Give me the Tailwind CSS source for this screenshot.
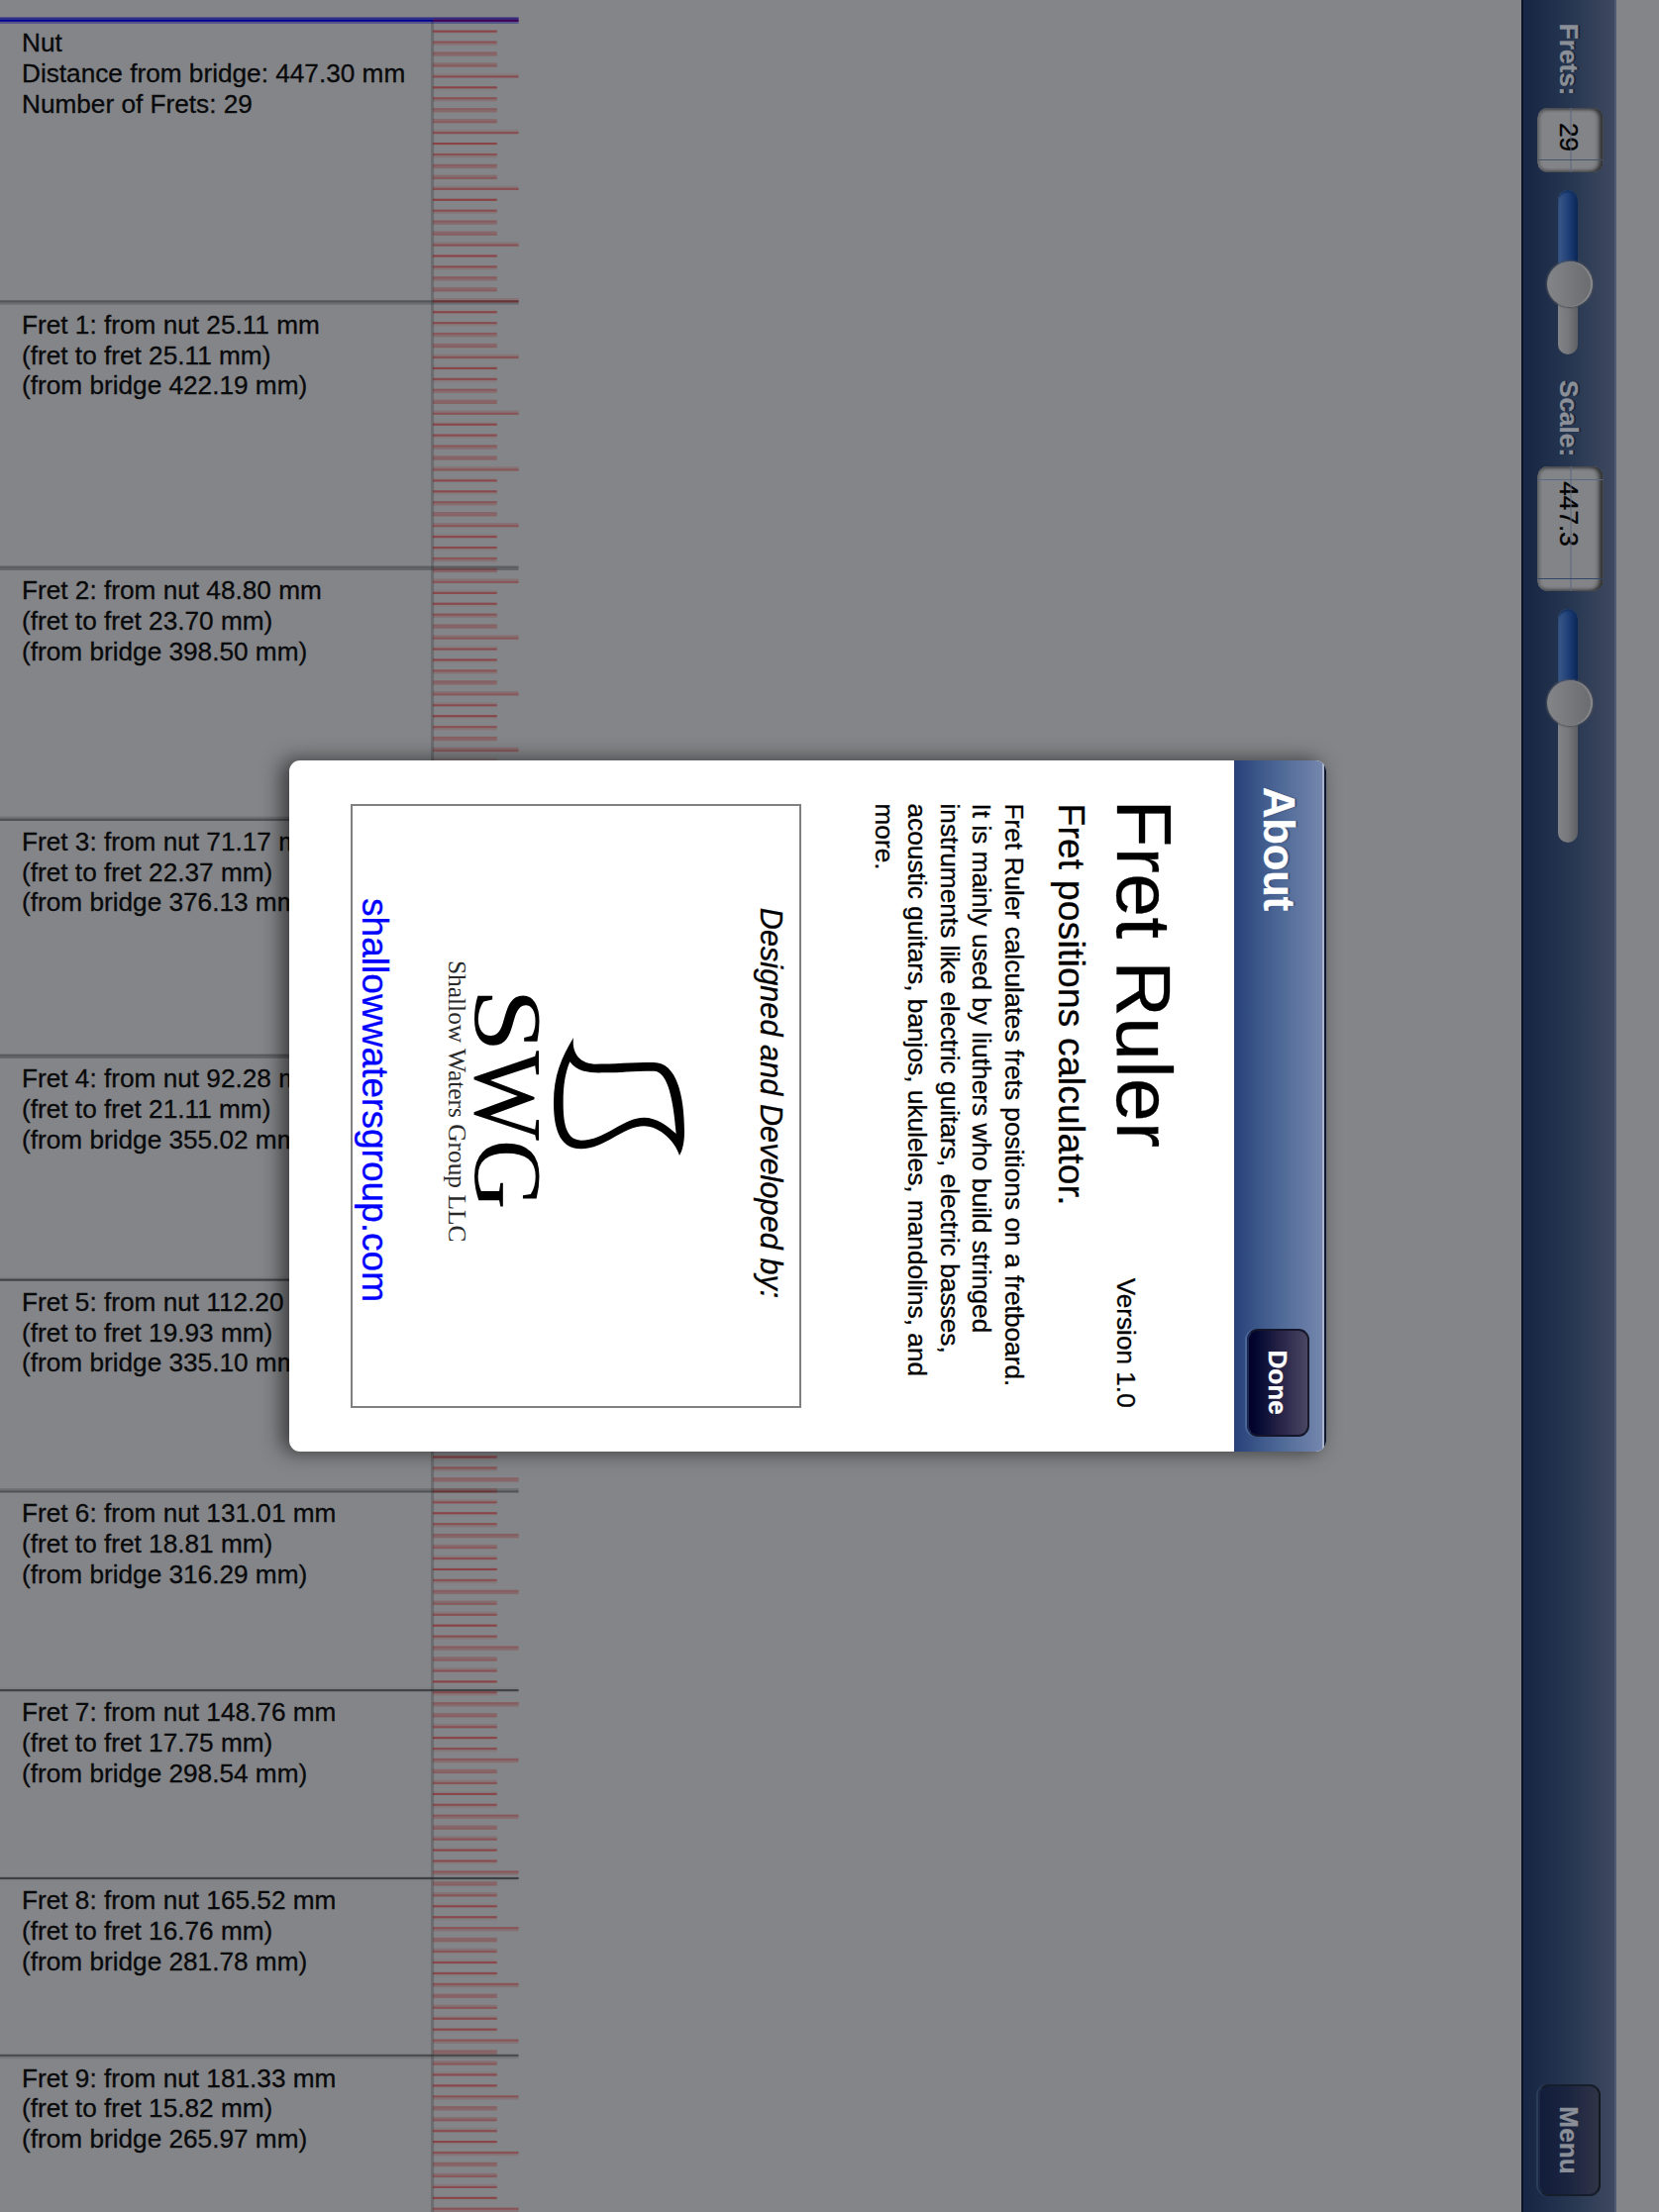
<!DOCTYPE html>
<html lang="en">
<head>
<meta charset="utf-8">
<title>Fret Ruler</title>
<script src="https://cdn.jsdelivr.net/npm/@tailwindcss/browser@4"></script>
</head>
<body class="relative h-[2234px] w-[1675px] overflow-hidden bg-[#848588] font-['Liberation_Sans',Arial,sans-serif] text-[26.18px] text-black [-webkit-text-stroke-width:0.3px]">

<!-- Fretboard ruler -->
<main class="relative h-[2234px] w-[524px] overflow-hidden">
  <svg id="ruler" class="absolute inset-0 h-[2234px] w-[524px]" viewBox="0 0 240.19 1024" preserveAspectRatio="none"></svg>
  <ol id="frets" class="relative pt-[20.4px] pl-[22px] leading-[30.7px] tracking-[0.01px] text-[#08090b]"></ol>
</main>

<!-- Landscape interface -->
<div class="absolute top-0 left-[1675px] h-[1675px] w-[2234px] origin-top-left rotate-90 pt-[43.3px]">
  <header class="flex h-24 items-center border-t-2 border-b-2 border-t-[#505c74] border-b-[#0b1426] bg-linear-to-b from-[#3f4960] via-[#263650] via-50% to-[#172544] pr-4 pl-[23.8px] font-bold text-[#8b8f97]">
    <span class="w-[72.7px] [text-shadow:0_-2px_0_#1a2438]">Frets:</span>
    <div class="relative ml-[12.5px] flex h-[66px] w-[65px] -translate-y-[1.5px] items-center rounded-[10px] bg-[#838487] pl-[15px] font-normal text-black shadow-[inset_0_4px_4px_#303133,inset_0_-2px_3px_#66686c,inset_2px_0_3px_#55575b,inset_-2px_0_3px_#66686c]">
      <span class="translate-y-[1.5px]">29</span>
      <i class="absolute top-[32px] left-0 h-px w-full bg-[#5a6880]"></i>
      <i class="absolute top-0 right-[12px] h-full w-px bg-[#46546c]"></i>
    </div>
    <div class="relative ml-[18px] h-5 w-[166px] translate-y-px rounded-full bg-linear-to-b from-[#5f6064] via-[#77787c] to-[#828387]">
      <div class="h-5 w-[95px] rounded-l-full bg-linear-to-b from-[#0a2657] via-[#204079] to-[#3c5a88] shadow-[inset_2px_0_2px_#12305f]"></div>
      <div class="absolute -top-[15.5px] left-[72px] size-[46px] rounded-full bg-linear-to-b from-[#6a6b6f] to-[#848588] shadow-[inset_0_2px_1px_#88898c,0_0_2px_1px_#4d5159]"></div>
    </div>
    <span class="ml-[26px] w-[77px] [text-shadow:0_-2px_0_#1a2438]">Scale:</span>
    <div class="relative ml-[10.3px] flex h-[66px] w-[126px] -translate-y-[1.5px] items-center rounded-[10px] bg-[#838487] pl-[15px] font-normal text-black shadow-[inset_0_4px_4px_#303133,inset_0_-2px_3px_#66686c,inset_2px_0_3px_#55575b,inset_-2px_0_3px_#66686c]">
      <span class="translate-y-[1.5px]">447.3</span>
      <i class="absolute top-[32px] left-0 h-px w-full bg-[#5a6880]"></i>
      <i class="absolute top-0 left-[13px] h-full w-px bg-[#5a6880]"></i>
      <i class="absolute top-0 right-[12px] h-full w-px bg-[#33466a]"></i>
    </div>
    <div class="relative ml-[17.7px] h-5 w-[236px] translate-y-px rounded-full bg-linear-to-b from-[#5f6064] via-[#77787c] to-[#828387]">
      <div class="h-5 w-[95px] rounded-l-full bg-linear-to-b from-[#0a2657] via-[#204079] to-[#3c5a88] shadow-[inset_2px_0_2px_#12305f]"></div>
      <div class="absolute -top-[15.5px] left-[72px] size-[46px] rounded-full bg-linear-to-b from-[#6a6b6f] to-[#848588] shadow-[inset_0_2px_1px_#88898c,0_0_2px_1px_#4d5159]"></div>
    </div>
    <button class="ml-auto flex h-[63px] w-[113px] -translate-y-px items-center justify-center rounded-[11px] border-2 border-t-[#141821] border-r-[#161d2b] border-b-[#1c2940] border-l-[#161d2b] bg-linear-to-b from-[#303447] via-[#1c2540] to-[#111d3a] font-bold shadow-[0_2px_0_#2a3c5c]"><span class="translate-y-px">Menu</span></button>
  </header>

  <!-- About dialog -->
  <section class="absolute top-[335.7px] left-[767.5px] flex h-[1047.2px] w-[698.2px] flex-col overflow-hidden rounded-[11px] bg-white shadow-[0_7px_20px_1px_rgba(0,0,0,0.55)]">
    <div class="flex h-[93.6px] shrink-0 items-center justify-between border-t-2 border-t-[#0d1830] bg-linear-to-b from-[#7688ae] via-[#4d6896] via-50% to-[#28427a] pr-[15px] pl-[27.5px] text-white shadow-[inset_0_2px_0_#a9b4cb,inset_0_-1px_0_#2a4070]">
      <h1 class="translate-y-px text-[43.6px] leading-none font-bold tracking-[-0.2px] [text-shadow:0_-2px_1px_#35507e]">About</h1>
      <button class="flex h-[63px] w-[109px] translate-y-px items-center justify-center rounded-[11px] border-2 border-t-[#181a2a] border-r-[#15162c] border-b-[#1a2850] border-l-[#15162c] bg-linear-to-b from-[#4a4663] via-[#242145] to-[#01002a] font-bold shadow-[0_2px_0_#4a6597]"><span class="translate-y-px">Done</span></button>
    </div>
    <div class="flex flex-col pt-[46px] pr-[44px] pl-[44px]">
      <div class="-ml-1 flex items-baseline justify-between">
        <h2 class="text-[78.5px] leading-[90px] tracking-[0.3px]">Fret Ruler</h2>
        <span>Version 1.0</span>
      </div>
      <h3 class="mt-[5.5px] text-[37.1px] leading-[44px] tracking-[0.25px]">Fret positions calculator.</h3>
      <p class="mt-5 leading-[32.8px] tracking-[0.05px] whitespace-nowrap">Fret Ruler calculates frets positions on a fretboard.<br>It is mainly used by liuthers who build stringed<br>instruments like electric guitars, electric basses,<br>acoustic guitars, banjos, ukuleles, mandolins, and<br>more.</p>
      <div class="mt-[66.8px] flex h-[455.3px] flex-col items-center border-2 border-[#808080] pt-[10.5px]">
        <p class="mr-[5px] text-[30.54px] leading-9 tracking-[0.1px] italic">Designed and Developed by:</p>
        <svg class="mt-[20.8px] ml-[7px] h-[320px] w-[360px] shrink-0 [-webkit-text-stroke-width:0px]" viewBox="0 0 1080 960" font-family="'Liberation Serif', serif">
          <path fill-rule="evenodd" d="M324 483C365 488 400 470 404 420C404 360 399 310 399 240C399 170 500 147 610 147C640 147 665 152 681 162C640 175 592 220 592 270C592 330 661 390 661 460C661 530 590 543 520 543C440 543 385 520 324 483ZM397 494C430 470 431 430 430 390C430 340 425 310 425 240C425 195 520 180 615 172C590 200 566 230 566 270C566 330 635 390 635 460C635 510 570 514 520 514C470 514 430 508 397 494Z"/>
          <g font-size="294">
            <text x="173" y="779" textLength="196" lengthAdjust="spacingAndGlyphs">S</text>
            <text x="364" y="779" textLength="272" lengthAdjust="spacingAndGlyphs">W</text>
            <text x="632" y="779">G</text>
          </g>
          <text x="90" y="861" font-size="74" fill="#2a2a2a" textLength="853" lengthAdjust="spacingAndGlyphs">Shallow Waters Group LLC</text>
        </svg>
        <a class="mt-[19.3px] mr-[11px] text-[37.1px] leading-[44px] text-[#0000ff]">shallowwatersgroup.com</a>
      </div>
    </div>
  </section>
</div>

<script>
  const SCALE = 447.30, PT_PER_MM = 132 / 25.4, PX = 1675 / 768, ORIGIN = 9.35;
  const frets = [
    [0, ['Nut', 'Distance from bridge: 447.30 mm', 'Number of Frets: 29']],
    ...[[25.11, 25.11], [48.80, 23.70], [71.17, 22.37], [92.28, 21.11], [112.20, 19.93],
        [131.01, 18.81], [148.76, 17.75], [165.52, 16.76], [181.33, 15.82]].map(([pos, gap], i) => [pos, [
      `Fret ${i + 1}: from nut ${pos.toFixed(2)} mm`,
      `(fret to fret ${gap.toFixed(2)} mm)`,
      `(from bridge ${(SCALE - pos).toFixed(2)} mm)`]]),
  ];

  // One-point lines are spread over the two point rows they overlap.
  let svg = '';
  const line = (x1, x2, y, width, color, alpha) => {
    const a = y - width / 2, b = y + width / 2;
    for (let r = Math.floor(a); r < b; r++) {
      const cover = Math.min(b, r + 1) - Math.max(a, r);
      if (cover > 0.02) svg += `<rect x="${x1}" y="${r}" width="${x2 - x1}" height="1" fill="${color}" fill-opacity="${(cover * alpha).toFixed(3)}"/>`;
    }
  };
  svg += '<rect x="199.4" y="9.5" width="1.4" height="1015" fill="#5c5d61" fill-opacity="0.6"/>';
  frets.forEach(([pos], i) => i
    ? line(0, 240, ORIGIN + pos * PT_PER_MM, 1, '#2a2b2e', 0.8)
    : line(0, 240, ORIGIN, 2, '#000090', 1));
  for (let mm = 0; mm < 196; mm++) line(200.3, mm % 5 ? 230 : 240, ORIGIN + mm * PT_PER_MM, 1, '#900004', 0.5);
  document.getElementById('ruler').innerHTML = svg;

  document.getElementById('frets').innerHTML = frets.map(([pos, lines], i) => {
    const next = i + 1 < frets.length ? frets[i + 1][0] : 200;
    return `<li class="pt-[8px] whitespace-nowrap" style="height:${((next - pos) * PT_PER_MM * PX).toFixed(2)}px">${lines.map(t => `<p>${t}</p>`).join('')}</li>`;
  }).join('');
</script>
</body>
</html>
